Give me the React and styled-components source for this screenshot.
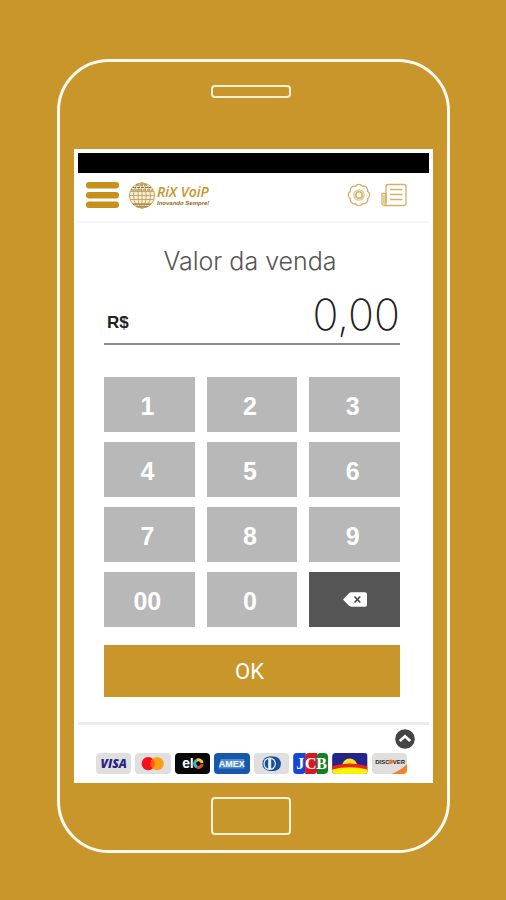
import React from 'react';
import styled, { createGlobalStyle } from 'styled-components';

const GOLD = '#c8962a';

const GlobalStyle = createGlobalStyle`
  * {
    box-sizing: border-box;
  }
  body {
    margin: 0;
    background-color: ${GOLD};
    font-family: "Liberation Sans", Arial, sans-serif;
  }
  button {
    border: 0;
    padding: 0;
    font-family: inherit;
    cursor: pointer;
  }
  svg {
    display: block;
  }
`;

const Page = styled.main`
  min-height: 100vh;
  padding: 59px 56px 47px 57px;
`;

const Phone = styled.div`
  display: flex;
  flex-direction: column;
  padding: 23px 14px 15px;
  border: 3px solid #fffaf0;
  border-radius: 52px;
`;

const Speaker = styled.div`
  align-self: center;
  width: 80px;
  height: 13px;
  margin: 0 5px 51px 0;
  border: 2px solid #fdf0d8;
  border-radius: 4px;
`;

const HomeButton = styled.button`
  align-self: center;
  width: 80px;
  height: 38px;
  margin: 14px 5px 0 0;
  background-color: transparent;
  border: 2px solid #fdf0d8;
  border-radius: 4px;
`;

const Screen = styled.div`
  padding: 4px 4px 8px;
  background-color: #fff;
`;

const StatusBar = styled.div`
  height: 20px;
  background-color: #000;
`;

const Header = styled.header`
  display: flex;
  align-items: center;
  height: 50px;
  padding: 0 22px 4px 8px;
  border-bottom: 2px solid #f5f5f5;
`;

const IconButton = styled.button`
  background-color: transparent;
  color: ${GOLD};
  margin-left: ${props => props.$gap || 0}px;
`;

const Logo = styled.a`
  display: flex;
  align-items: center;
  gap: 1px;
  margin: 0 auto 0 9px;
  text-decoration: none;
`;

const LogoText = styled.span`
  display: flex;
  flex-direction: column;
  font-style: italic;
  white-space: nowrap;
`;

const Brand = styled.span`
  color: ${GOLD};
  font-family: "Open Sans", sans-serif;
  font-size: 14px;
  font-weight: 600;
  line-height: 16px;
`;

const Tagline = styled.span`
  color: #8f6c22;
  font-size: 6px;
  font-weight: bold;
  line-height: 7px;
`;

const Content = styled.section`
  padding: 22px 29px 25px 26px;
`;

const Title = styled.h1`
  margin: 0;
  padding-right: 4px;
  color: #555;
  font-family: Inter, sans-serif;
  font-size: 25px;
  font-weight: 300;
  line-height: 32px;
  text-align: center;
`;

const Field = styled.div`
  display: flex;
  align-items: flex-end;
  height: 68px;
  margin-bottom: 32px;
  padding-left: 3px;
  border-bottom: 2px solid #8b8b8b;
`;

const Currency = styled.label`
  padding-bottom: 10px;
  color: #222;
  font-size: 17px;
  font-weight: bold;
  line-height: 20px;
`;

const Amount = styled.input`
  flex: 1;
  min-width: 0;
  height: 58px;
  padding: 0;
  border: 0;
  outline: 0;
  background: transparent;
  color: #222;
  font-family: Inter, sans-serif;
  font-size: 43px;
  font-weight: 200;
  text-align: right;
`;

const Keypad = styled.div`
  display: grid;
  grid-template-columns: repeat(3, 1fr);
  gap: 10px 12px;
`;

const Key = styled.button`
  display: flex;
  align-items: center;
  justify-content: center;
  height: 55px;
  padding: ${props => (props.$dark ? '0' : '3px 4px 0 0')};
  background-color: ${props => (props.$dark ? '#555' : '#b8b8b8')};
  color: #fff;
  font-size: 25px;
  font-weight: bold;
`;

const Confirm = styled.button`
  width: 100%;
  height: 52px;
  margin-top: 18px;
  padding-right: 5px;
  background-color: ${GOLD};
  color: #fff;
  font-family: Roboto, sans-serif;
  font-size: 22px;
`;

const Footer = styled.footer`
  display: flex;
  flex-direction: column;
  padding: 4px 22px 0 18px;
  border-top: 3px solid #ececec;
`;

const UpButton = styled.button`
  align-self: flex-end;
  margin-right: -8px;
  background-color: transparent;
`;

const Cards = styled.ul`
  display: flex;
  gap: 4px;
  margin: 4px 0 1px;
  padding: 0;
  list-style: none;
`;

const Card = styled.li`
  flex: 1;
  height: 21px;
  overflow: hidden;
  border-radius: 4px;
  background-color: ${props => props.$color || '#dfdfdf'};
  svg {
    width: 100%;
    height: 100%;
  }
`;

const MenuIcon = () => (
  <svg width="33" height="27" viewBox="0 0 33 27" fill="#c4921c">
    <rect y="0" width="33" height="6.6" rx="3" />
    <rect y="10" width="33" height="6.6" rx="3" />
    <rect y="19.5" width="33" height="6.6" rx="3" />
  </svg>
);

const Globe = () => (
  <svg width="28" height="27" viewBox="0 0 28 27" fill="none" stroke="#c79f50" strokeWidth="0.9">
    <circle cx="14" cy="13.5" r="12.6" fill="#f8efdb" />
    <ellipse cx="14" cy="13.5" rx="4" ry="12.6" />
    <ellipse cx="14" cy="13.5" rx="8.5" ry="12.6" />
    <path d="M14 1v25M1.5 13.5h25M2.5 9.5h23M2.5 17.5h23M5 21.5h18" />
    <path d="M5 5.5h18M8 3h12M3 8h22" stroke="#857652" strokeWidth="1.1" strokeDasharray="3 1" />
    <path d="M5 22.5h18M8 24.5h12" stroke="#9c8046" />
  </svg>
);

// eight rounded teeth around the centre
const gearPath = () => {
  const points = [];
  for (let i = 0; i < 8; i++) {
    const angle = (22.5 + i * 45) * Math.PI / 180;
    points.push(`${(12 + 9.4 * Math.cos(angle)).toFixed(2)} ${(12 + 9.4 * Math.sin(angle)).toFixed(2)}`);
  }
  return `M${points[7]}` + points.map(p => `A4.2 4.2 0 0 1 ${p}`).join('') + 'Z';
}

const GearIcon = () => (
  <svg width="24" height="24" viewBox="0 0 24 24" fill="none" stroke="#d6b068" strokeWidth="1.3">
    <path d={gearPath()} />
    <circle cx="12" cy="12" r="5.2" stroke="#e3c891" />
    <circle cx="12" cy="12" r="3.2" strokeWidth="1.6" />
  </svg>
);

const NewsIcon = () => (
  <svg width="26" height="24" viewBox="0 0 26 24" fill="none" stroke="#d6b068" strokeWidth="1.3">
    <path d="M5 20V3.5Q5 1.5 7 1.5H23Q25 1.5 25 3.5V20.5Q25 22.5 23 22.5H3.5Q1 22.5 1 20V10.5H5" />
    <path d="M5 10.5V20Q5 22.5 3 22.5M3 12V21M9 6.5H21.5M9 11.5H21.5M9 16.5H21.5" />
  </svg>
);

const BackspaceIcon = () => (
  <svg width="24" height="15" viewBox="0 0 25 15">
    <path d="M0 7.5L6 1.2Q7.2 0 9 0H23Q25 0 25 2V13Q25 15 23 15H9Q7.2 15 6 13.8Z" fill="#fff" />
    <path d="M12 4.3L18 10.7M18 4.3L12 10.7" stroke="#444" strokeWidth="1.6" />
  </svg>
);

const UpIcon = () => (
  <svg width="20" height="20" viewBox="0 0 20 20">
    <circle cx="10" cy="10" r="9.8" fill="#444" />
    <path d="M4.8 12L10 7.3L15.2 12" fill="none" stroke="#fff" strokeWidth="2.8" />
  </svg>
);

const Visa = () => (
  <svg viewBox="0 0 35 21">
    <text x="17.5" y="15" textAnchor="middle" fill="#282383" fontFamily="Open Sans" fontWeight="800" fontStyle="italic" fontSize="12">VISA</text>
  </svg>
);

const Mastercard = () => (
  <svg viewBox="0 0 35 21">
    <circle cx="13" cy="10.7" r="6.6" fill="#f5101c" />
    <circle cx="22" cy="10.7" r="6.6" fill="#ff9d12" />
    <path d="M17.5 5.9A6.6 6.6 0 0 1 17.5 15.5A6.6 6.6 0 0 1 17.5 5.9Z" fill="#ff5a0c" />
  </svg>
);

const Elo = () => (
  <svg viewBox="0 0 35 21">
    <text x="7" y="15" fill="#fff" fontFamily="Inter" fontWeight="700" fontSize="13">el</text>
    <g fill="none" strokeWidth="3">
      <path d="M22 14.2A3.8 3.8 0 0 1 21.5 7.3" stroke="#36b5df" />
      <path d="M21.5 7.3A3.8 3.8 0 0 1 27 10" stroke="#f5cf27" />
      <path d="M27 11A3.8 3.8 0 0 1 22 14.2" stroke="#e9452d" />
    </g>
  </svg>
);

const Amex = () => (
  <svg viewBox="0 0 35 21">
    <path d="M6.5 6H30V15.5H4Z" fill="#4f8bd0" />
    <text x="17.5" y="14" textAnchor="middle" fill="#fff" fontFamily="Liberation Sans" fontWeight="700" fontSize="9">AMEX</text>
  </svg>
);

const Diners = () => (
  <svg viewBox="0 0 35 21">
    <path d="M15 3.5H19.5A7.2 7.2 0 0 1 19.5 18H15Z" fill="#174f99" />
    <circle cx="15.5" cy="10.7" r="7.3" fill="#174f99" />
    <circle cx="15.5" cy="10.7" r="6.3" fill="#e8edf3" />
    <path d="M14 6A4.9 4.9 0 0 0 14 15.4ZM17 6A4.9 4.9 0 0 1 17 15.4Z" fill="#174f99" />
  </svg>
);

const Jcb = () => (
  <svg viewBox="0 0 35 21">
    <path d="M0 0H12.5V17Q12.5 21 8.5 21H0Z" fill="#1444d8" />
    <path d="M12 4Q12 0 16 0H24V17Q24 21 20 21H12Z" fill="#d91722" />
    <path d="M23.5 4Q23.5 0 27.5 0H35V21H23.5Z" fill="#118026" />
    <g fill="#fff" textAnchor="middle" fontFamily="Liberation Serif" fontWeight="700" fontSize="16">
      <text x="7" y="16">J</text>
      <text x="17.5" y="16">C</text>
      <text x="28.5" y="16">B</text>
    </g>
  </svg>
);

const Aura = () => (
  <svg viewBox="0 0 35 21">
    <rect width="35" height="21" fill="#24248b" />
    <path d="M10 13A7.5 7.5 0 0 1 25 13Z" fill="#ffe21c" />
    <path d="M0 13Q17.5 8 35 13V21H0Z" fill="#ef2417" />
    <path d="M0 16.5Q17.5 12 35 16.5V21H0Z" fill="#fff200" />
  </svg>
);

const Discover = () => (
  <svg viewBox="0 0 35 21">
    <path d="M35 11Q29 17 19 21H35Z" fill="#f58228" />
    <g fill="#292522" fontFamily="Liberation Sans" fontWeight="700" fontSize="6">
      <text x="3" y="11">DISC</text>
      <text x="20.5" y="11">VER</text>
    </g>
    <circle cx="18.7" cy="8.8" r="2.2" fill="#ef7726" />
  </svg>
);

const cards = [
  { name: 'Visa', Icon: Visa },
  { name: 'Mastercard', Icon: Mastercard },
  { name: 'Elo', Icon: Elo, color: '#080808' },
  { name: 'American Express', Icon: Amex, color: '#1558ae' },
  { name: 'Diners Club', Icon: Diners },
  { name: 'JCB', Icon: Jcb, color: '#fff' },
  { name: 'Aura', Icon: Aura },
  { name: 'Discover', Icon: Discover }
];

const keys = ['1', '2', '3', '4', '5', '6', '7', '8', '9', '00', '0'];

const formatAmount = cents => `${Math.floor(cents / 100)},${String(cents % 100).padStart(2, '0')}`;

class App extends React.Component {
  constructor(props) {
    super(props);
    this.state = {
      cents: 0
    }
  }
  pressKey(key) {
    const next = Number(`${this.state.cents}${key}`);
    if (next < 100000000) {
      this.setState({ cents: next });
    }
  }
  erase() {
    this.setState({ cents: Math.floor(this.state.cents / 10) });
  }
  render() {
    return (
      <Page>
        <GlobalStyle />
        <Phone>
          <Speaker />
          <Screen>
            <StatusBar />
            <Header>
              <IconButton type="button" aria-label="Menu"><MenuIcon /></IconButton>
              <Logo href="#">
                <Globe />
                <LogoText>
                  <Brand>RiX VoiP</Brand>
                  <Tagline>Inovando Sempre!</Tagline>
                </LogoText>
              </Logo>
              <IconButton type="button" aria-label="Configurações"><GearIcon /></IconButton>
              <IconButton type="button" aria-label="Relatórios" $gap={10}><NewsIcon /></IconButton>
            </Header>
            <Content>
              <Title>Valor da venda</Title>
              <Field>
                <Currency htmlFor="amount">R$</Currency>
                <Amount id="amount" readOnly value={formatAmount(this.state.cents)} />
              </Field>
              <Keypad>
                {keys.map(key => (
                  <Key key={key} type="button" onClick={() => this.pressKey(key)}>{key}</Key>
                ))}
                <Key type="button" $dark aria-label="Apagar" onClick={() => this.erase()}>
                  <BackspaceIcon />
                </Key>
              </Keypad>
              <Confirm type="button">OK</Confirm>
            </Content>
            <Footer>
              <UpButton type="button" aria-label="Expandir"><UpIcon /></UpButton>
              <Cards>
                {cards.map(({ name, Icon, color }) => (
                  <Card key={name} $color={color} aria-label={name}><Icon /></Card>
                ))}
              </Cards>
            </Footer>
          </Screen>
          <HomeButton type="button" aria-label="Início" />
        </Phone>
      </Page>
    );
  }
}

export default App;
